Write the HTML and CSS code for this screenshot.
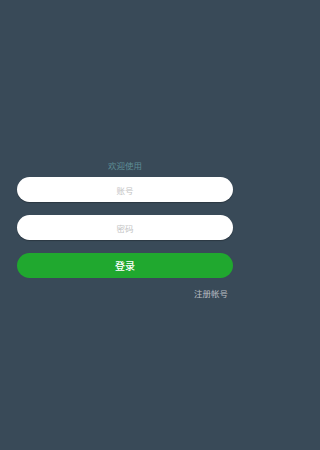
FILE: index.html
```html
<!DOCTYPE html>
<html lang="zh">
<head>
<meta charset="utf-8">
<link rel="stylesheet" href="styles.css">
</head>
<body>
<div class="page">
  <div class="welcome">欢迎使用</div>
  <form class="form">
    <input class="field" type="text" placeholder="账号">
    <input class="field" type="password" placeholder="密码">
    <button class="login" type="button">登录</button>
  </form>
  <div class="links"><a class="register">注册帐号</a></div>
</div>
</body>
</html>
```
FILE: styles.css
```css
html, body {
  margin: 0;
  padding: 0;
  background: #394a58;
  height: 100%;
}
.page {
  box-sizing: border-box;
  width: 250px;
  height: 450px;
  padding: 159px 17px 0;
  display: flex;
  flex-direction: column;
  font-family: "Noto Sans CJK SC", "Noto Sans", sans-serif;
}
.welcome {
  text-align: center;
  font-size: 8.5px;
  line-height: 12px;
  color: #5d8d95;
}
.form {
  margin: 6px 0 0;
  display: flex;
  flex-direction: column;
  gap: 13px;
}
.field {
  box-sizing: border-box;
  height: 25px;
  width: 100%;
  border: none;
  border-radius: 13px;
  background: #ffffff;
  text-align: center;
  font-family: inherit;
  font-size: 8.5px;
  color: #333;
  outline: none;
  box-shadow: 0 1px 1px rgba(0, 0, 0, 0.25);
  padding: 0;
}
.field::placeholder {
  color: #c4c4c4;
}
.login {
  height: 25px;
  width: 100%;
  border: none;
  border-radius: 13px;
  background: #20a82f;
  color: #ffffff;
  font-family: inherit;
  font-size: 10px;
  font-weight: 500;
  padding: 0;
}
.links {
  margin-top: 9px;
  display: flex;
  justify-content: flex-end;
  padding-right: 5px;
}
.register {
  font-size: 8.5px;
  line-height: 12px;
  color: #b9bec3;
}
```
